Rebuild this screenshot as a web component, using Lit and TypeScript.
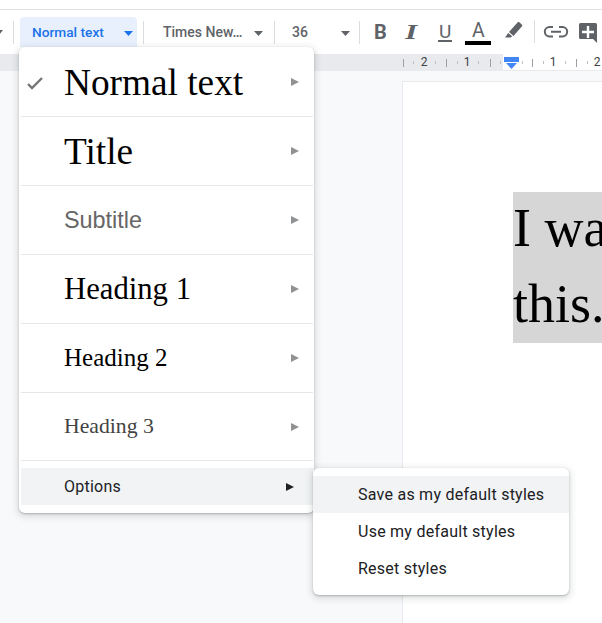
import { LitElement, html, css, svg } from "lit";
import { customElement } from "lit/decorators.js";

const ARROW = html`<svg class="sub" width="8" height="8" viewBox="0 0 8 8"><path d="M0 0L8 4L0 8Z" fill="currentColor"/></svg>`;
const caret = (c: string) => html`<svg class="caret" width="9" height="5" viewBox="0 0 10 5" preserveAspectRatio="none"><path d="M0 0H10L5 5Z" fill="${c}"/></svg>`;

const styles = [
  { label: "Normal text", cls: "s-normal", check: true },
  { label: "Title", cls: "s-title" },
  { label: "Subtitle", cls: "s-subtitle" },
  { label: "Heading 1", cls: "s-h1" },
  { label: "Heading 2", cls: "s-h2" },
  { label: "Heading 3", cls: "s-h3" },
];

const rulerMarks: Array<[number, string]> = [
  [403, "l"], [413, "s"], [424, "2"], [435, "s"], [446, "l"], [457, "s"], [467, "1"], [478, "s"], [490, "l"], [500, "s"],
  [522, "s"], [532, "l"], [543, "s"], [553, "1"], [565, "s"], [576, "l"], [587, "s"], [597, "2"],
];

@customElement("app-root")
export class AppRoot extends LitElement {
  static styles = css`
    :host { display: block; width: 602px; height: 623px; overflow: hidden; position: relative; background: #f8f9fa; font-family: Roboto, "Liberation Sans", sans-serif; }
    .top { height: 9px; background: #fff; border-bottom: 1px solid #dfe1e5; }
    .toolbar { height: 44px; background: #fff; display: flex; align-items: center; color: #5f6368; position: relative; }
    .tcaret { margin-left: -5px; width: 8px; flex: none; overflow: hidden; display: flex; justify-content: flex-end; }
    .gap { width: 10px; flex: none; }
    .sep { width: 1px; height: 23px; background: #dadce0; flex: none; }
    .drop { height: 30px; border-radius: 4px 4px 0 0; font-weight: 500; flex: none; position: relative; }
    .drop span { position: absolute; white-space: nowrap; top: 7px; font-size: 14px; line-height: 16px; }
    .drop .caret { position: absolute; top: 14px; }
    .style { width: 117px; background: #e8f0fe; color: #1a73e8; margin-left: 6px; margin-right: 6px; }
    .style span { left: 12px; font-size: 13.7px; }
    .style .caret { left: 104px; }
    .font { width: 130px; }
    .font span { left: 19px; }
    .font .caret { left: 110px; }
    .size { width: 84px; }
    .size span { left: 17px; }
    .size .caret { left: 66px; }
    .ic { position: absolute; left: 300px; top: 0; }
    .g-b { font: 700 20px Roboto, sans-serif; fill: #5f6368; }
    .g-i { font: italic 700 21px "Liberation Serif", serif; fill: #5f6368; }
    .g-u { font: 400 19px Roboto, sans-serif; fill: #5f6368; }
    .g-a { font: 400 19.500px Roboto, sans-serif; fill: #5f6368; }
    .sep2 { position: absolute; left: 534px; top: 10px; }
    .ruler { height: 17px; background: linear-gradient(to right, #e8eaed 0 503px, #fff 503px); border-bottom: 1px solid #e8eaed; position: relative; box-sizing: border-box; }
    .mark { position: absolute; width: 1px; }
    .mark.l { top: 5px; height: 8px; background: #9aa0a6; }
    .mark.s { top: 7px; height: 3px; background: #bdc1c6; }
    .num { position: absolute; top: 0; font-size: 12px; line-height: 16px; color: #3c4043; width: 10px; text-align: center; }
    .handle { position: absolute; left: 504px; top: 3px; }
    .canvas { height: 552px; display: flex; justify-content: flex-end; padding-top: 10px; box-sizing: border-box; }
    .page { width: 200px; height: 542px; background: #fff; border-left: 1px solid #e8eaed; border-top: 1px solid #e8eaed; box-sizing: border-box; padding: 110px 0 0 110px; overflow: hidden; }
    .doc { display: flow-root; font: 54px/75.5px "Liberation Serif", serif; color: #000; background: #d6d6d6; width: 89px; white-space: nowrap; }
    .doc div { margin-top: -1px; padding-bottom: 1px; }
    .menu { position: absolute; left: 19px; top: 47px; width: 295px; height: 466px; background: #fff; border-radius: 6px; box-shadow: 0 2px 6px 2px rgba(60,64,67,.15), 0 1px 2px rgba(60,64,67,.3); box-sizing: border-box; padding: 1px 1px 0 2px; }
    .row { height: 69px; border-bottom: 1px solid #e4e6e8; box-sizing: border-box; display: flex; align-items: center; position: relative; padding-left: 43px; color: #000; }
    .row.last { height: 68px; }
    .check { position: absolute; left: 6px; top: 28px; }
    .sub { position: absolute; left: 270px; top: 50%; margin-top: -4px; color: #8f9193; }
    .s-normal { font: 37.3px "Liberation Serif", serif; }
    .s-title { font: 37.3px "Liberation Serif", serif; }
    .s-subtitle { font: 23.4px "Liberation Sans", sans-serif; color: #666; }
    .s-h1 { font: 30.7px "Liberation Serif", serif; }
    .s-h2 { font: 25px "Liberation Serif", serif; }
    .s-h3 { font: 21.7px "Liberation Serif", serif; color: #434343; }
    .opt { margin-top: 7px; height: 37px; background: #f1f3f4; display: flex; align-items: center; padding-left: 43px; font-size: 16px; letter-spacing: .25px; color: #202124; position: relative; }
    .opt .sub { left: 265px; color: #202124; }
    .submenu { position: absolute; left: 313px; top: 468px; width: 256px; height: 127px; background: #fff; border-radius: 6px; box-shadow: 0 2px 6px 2px rgba(60,64,67,.15), 0 1px 2px rgba(60,64,67,.3); padding-top: 8px; box-sizing: border-box; }
    .si { height: 36.7px; display: flex; align-items: center; padding: 1px 0 0 45px; box-sizing: border-box; font-size: 16px; letter-spacing: .25px; color: #202124; }
    .si.on { background: #f1f3f4; }
  `;

  render() {
    return html`
      <div class="top"></div>
      <div class="toolbar">
        <div class="tcaret">${caret("#5f6368")}</div>
        <div class="gap"></div>
        <div class="sep"></div>
        <div class="drop style"><span>Normal text</span>${caret("#1a73e8")}</div>
        <div class="sep"></div>
        <div class="drop font"><span>Times New…</span>${caret("#5f6368")}</div>
        <div class="sep"></div>
        <div class="drop size"><span>36</span>${caret("#5f6368")}</div>
        <div class="sep"></div>
        <svg class="ic" width="302" height="44" viewBox="300 10 302 44">
          ${svg`
          <text class="g-b" x="374" y="39">B</text>
          <text class="g-i" transform="translate(405 39) scale(1.500 1)">I</text>
          <text class="g-u" x="439" y="38">U</text>
          <rect x="438" y="40" width="14" height="2" fill="#5f6368"/>
          <text class="g-a" x="472" y="37">A</text>
          <rect x="465" y="41" width="26" height="4" fill="#000"/>
          <path fill="#5f6368" d="M509 32l8.500-9.500c.5-.6 1.300-.6 1.800-.2l2.500 2.100c.6.500.6 1.300.2 1.900L513.500 36 509 32Zm-.8 1 4 3.300-1.500 1.200h-5.700Z"/>
          <path fill="none" stroke="#5f6368" stroke-width="2" d="M553 27h-3.500a4.700 4.700 0 0 0 0 9.400h3.500M559 27h3.500a4.700 4.700 0 0 1 0 9.400H559M551 31.700h10"/>
          <path fill="#5f6368" d="M580.500 23h15a1.500 1.500 0 0 1 1.500 1.500V43l-4-4h-12.500a1.500 1.500 0 0 1-1.500-1.500v-13A1.500 1.500 0 0 1 580.500 23Z"/>
          <path fill="#fff" d="M586.800 26h2.400v4.800h4.800v2.400h-4.800V38h-2.400v-4.800H582v-2.400h4.800Z"/>
          `}
        </svg>
        <div class="sep sep2"></div>
      </div>
      <div class="ruler">
        ${rulerMarks.map(([x, k]) =>
          k === "l" || k === "s"
            ? html`<div class="mark ${k}" style="left:${x}px"></div>`
            : html`<div class="num" style="left:${x - 5}px">${k}</div>`
        )}
        <svg class="handle" width="16" height="14" viewBox="0 0 16 14">
          <rect x="0" y="0" width="15" height="5" fill="#4285f4"/>
          <path d="M2 6H13L7.500 12Z" fill="#4285f4"/>
        </svg>
      </div>
      <div class="canvas">
        <div class="page">
          <div class="doc"><div>I wa<br />this.</div></div>
        </div>
      </div>
      <div class="menu">
        ${styles.map(
          (s, i) => html`<div class="row ${i === 5 ? "last" : ""}">
            ${s.check
              ? html`<svg class="check" width="16" height="14" viewBox="0 0 16 14"><path d="M1 8l4 4L15 2" fill="none" stroke="#757575" stroke-width="2.400"/></svg>`
              : ""}
            <span class="${s.cls}">${s.label}</span>${ARROW}
          </div>`
        )}
        <div class="opt">Options${ARROW}</div>
      </div>
      <div class="submenu">
        <div class="si on">Save as my default styles</div>
        <div class="si">Use my default styles</div>
        <div class="si">Reset styles</div>
      </div>
    `;
  }
}
